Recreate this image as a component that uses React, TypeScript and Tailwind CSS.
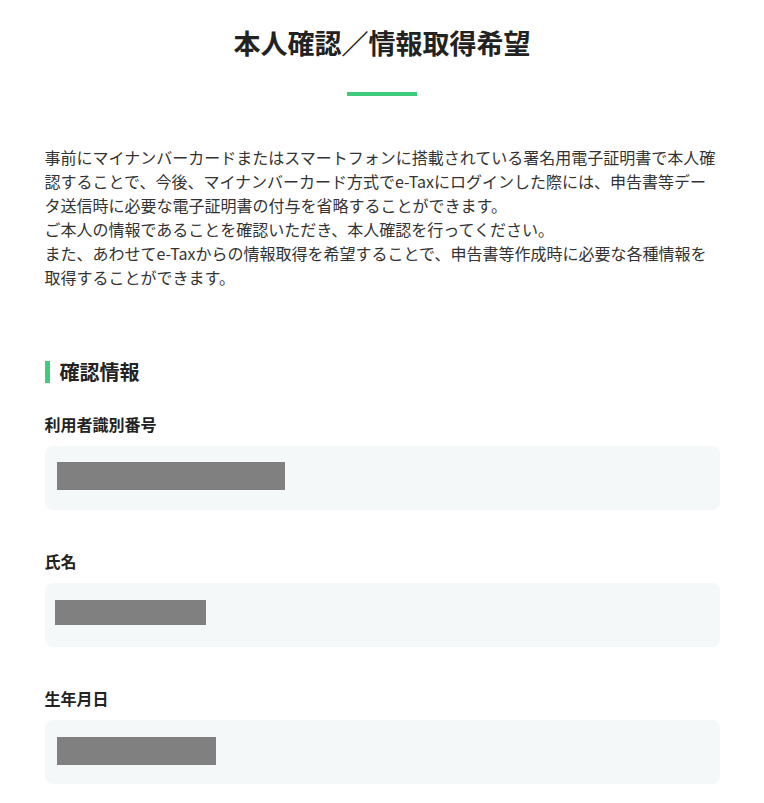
import React from "react";

const font = { fontFamily: '"Noto Sans CJK JP", "Noto Sans", sans-serif' };

type Field = {
  label: string;
  barClass: string;
};

const fields: Field[] = [
  { label: "利用者識別番号", barClass: "ml-[12px] mt-[16px] w-[228px] h-[28px]" },
  { label: "氏名", barClass: "ml-[10px] mt-[17px] w-[151px] h-[25px]" },
  { label: "生年月日", barClass: "ml-[12px] mt-[17px] w-[159px] h-[28px]" },
];

const App = () => {
  return (
    <div className="min-h-screen bg-white text-[#333333]" style={font}>
      <div className="w-[675px] mx-auto pt-[22px] pb-10">
        <h1 className="text-center text-[27px] leading-[42px] font-bold text-[#222222]">
          本人確認／情報取得希望
        </h1>
        <div className="mx-auto mt-[28px] w-[70px] h-[4px] bg-[#3ecb7c]" />

        <div className="mt-[49px] text-[16px] leading-[24px]">
          <p>
            事前にマイナンバーカードまたはスマートフォンに搭載されている署名用電子証明書で本人確認することで、今後、マイナンバーカード方式でe-Taxにログインした際には、申告書等データ送信時に必要な電子証明書の付与を省略することができます。
          </p>
          <p>ご本人の情報であることを確認いただき、本人確認を行ってください。</p>
          <p>
            また、あわせてe-Taxからの情報取得を希望することで、申告書等作成時に必要な各種情報を取得することができます。
          </p>
        </div>

        <h2 className="mt-[72px] flex items-center gap-[10px] text-[20px] leading-[22px] font-bold text-[#222222]">
          <span className="w-[5px] h-[22px] bg-[#3ecb7c]" />
          確認情報
        </h2>

        {fields.map((f, i) => (
          <div key={f.label} className={i === 0 ? "mt-[29px]" : "mt-[39px]"}>
            <div className="text-[16px] leading-[24px] font-bold text-[#222222]">{f.label}</div>
            <div className="mt-[10px] h-16 rounded-lg bg-[#f5f8f9] overflow-hidden">
              <div className={`bg-[#808080] ${f.barClass}`} />
            </div>
          </div>
        ))}
      </div>
    </div>
  );
};

export default App;
